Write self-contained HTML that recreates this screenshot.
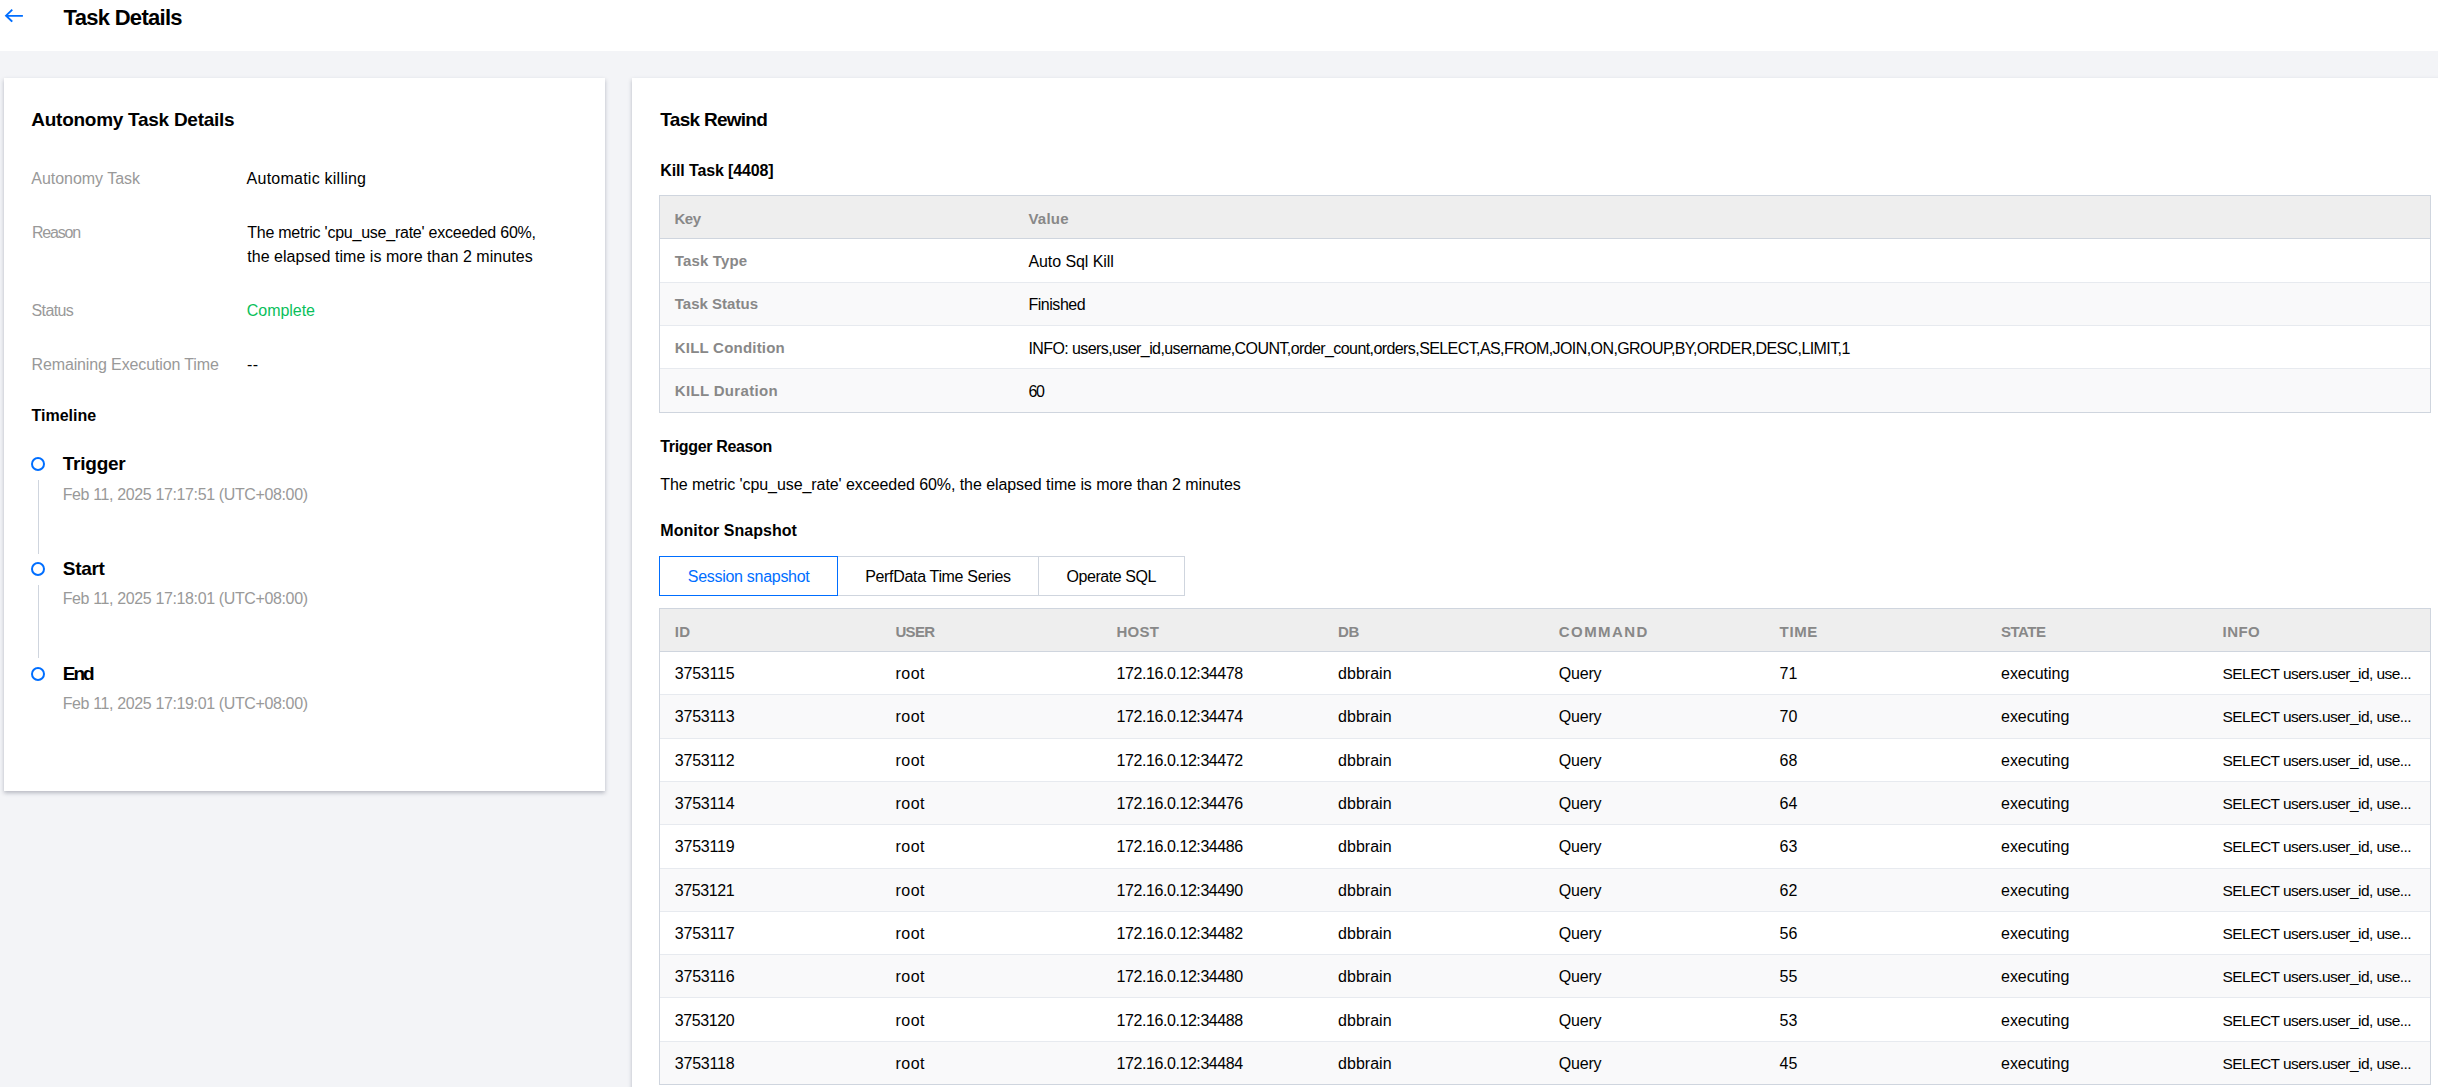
<!DOCTYPE html><html><head><meta charset="utf-8"><style>
html,body{margin:0;padding:0;}
body{width:2438px;height:1087px;overflow:hidden;background:#f3f4f7;position:relative;font-family:"Liberation Sans",sans-serif;}
.t{position:absolute;white-space:nowrap;}
.abs{position:absolute;}
</style></head><body>
<div class="abs" style="left:0;top:0;width:2438px;height:51px;background:#fff"></div>
<svg class="abs" style="left:0;top:0" width="40" height="40" viewBox="0 0 40 40"><path d="M11.6 10.3 L6.0 15.7 L11.6 21.0 M6.4 15.8 H22.0" fill="none" stroke="#006eff" stroke-width="1.8" stroke-linecap="square"/></svg>
<div class="t" style="left:63.60px;top:7.00px;font-size:22px;line-height:22px;font-weight:bold;color:#000;letter-spacing:-0.707px;">Task Details</div>
<div class="abs" style="left:4px;top:78px;width:601px;height:713px;background:#fff;box-shadow:0 2px 4px rgba(54,58,80,.32)"></div>
<div class="t" style="left:31.30px;top:110.00px;font-size:19px;line-height:19px;font-weight:bold;color:#000;letter-spacing:-0.271px;">Autonomy Task Details</div>
<div class="t" style="left:31.30px;top:171.00px;font-size:16px;line-height:16px;color:#999;letter-spacing:-0.035px;">Autonomy Task</div>
<div class="t" style="left:246.60px;top:171.00px;font-size:16px;line-height:16px;color:#000;letter-spacing:0.238px;">Automatic killing</div>
<div class="t" style="left:32.00px;top:225.00px;font-size:16px;line-height:16px;color:#999;letter-spacing:-1.192px;">Reason</div>
<div class="t" style="left:247.20px;top:225.00px;font-size:16px;line-height:16px;color:#000;letter-spacing:-0.238px;">The metric 'cpu_use_rate' exceeded 60%,</div>
<div class="t" style="left:247.20px;top:249.00px;font-size:16px;line-height:16px;color:#000;letter-spacing:0.047px;">the elapsed time is more than 2 minutes</div>
<div class="t" style="left:31.50px;top:303.00px;font-size:16px;line-height:16px;color:#999;letter-spacing:-0.612px;">Status</div>
<div class="t" style="left:246.80px;top:303.00px;font-size:16px;line-height:16px;color:#0abf5b;letter-spacing:-0.040px;">Complete</div>
<div class="t" style="left:31.50px;top:357.00px;font-size:16px;line-height:16px;color:#999;letter-spacing:-0.131px;">Remaining Execution Time</div>
<div class="t" style="left:247.00px;top:357.00px;font-size:16px;line-height:16px;color:#000;letter-spacing:0.360px;">--</div>
<div class="t" style="left:31.50px;top:408.00px;font-size:16px;line-height:16px;font-weight:bold;color:#000;letter-spacing:-0.006px;">Timeline</div>
<div class="abs" style="left:31px;top:457.3px;width:10px;height:10px;border:2px solid #006eff;border-radius:50%"></div>
<div class="t" style="left:62.80px;top:454.00px;font-size:19px;line-height:19px;font-weight:bold;color:#000;letter-spacing:-0.252px;">Trigger</div>
<div class="t" style="left:62.70px;top:487.00px;font-size:16px;line-height:16px;color:#999;letter-spacing:-0.372px;">Feb 11, 2025 17:17:51 (UTC+08:00)</div>
<div class="abs" style="left:38px;top:480.3px;width:1px;height:73.5px;background:#cfd5de"></div>
<div class="abs" style="left:31px;top:561.8px;width:10px;height:10px;border:2px solid #006eff;border-radius:50%"></div>
<div class="t" style="left:62.80px;top:559.00px;font-size:19px;line-height:19px;font-weight:bold;color:#000;letter-spacing:-0.293px;">Start</div>
<div class="t" style="left:62.70px;top:591.00px;font-size:16px;line-height:16px;color:#999;letter-spacing:-0.372px;">Feb 11, 2025 17:18:01 (UTC+08:00)</div>
<div class="abs" style="left:38px;top:584.8px;width:1px;height:73.5px;background:#cfd5de"></div>
<div class="abs" style="left:31px;top:666.6px;width:10px;height:10px;border:2px solid #006eff;border-radius:50%"></div>
<div class="t" style="left:62.80px;top:664.00px;font-size:19px;line-height:19px;font-weight:bold;color:#000;letter-spacing:-2.081px;">End</div>
<div class="t" style="left:62.70px;top:696.00px;font-size:16px;line-height:16px;color:#999;letter-spacing:-0.372px;">Feb 11, 2025 17:19:01 (UTC+08:00)</div>
<div class="abs" style="left:632px;top:78px;width:1900px;height:1100px;background:#fff;box-shadow:0 2px 4px rgba(54,58,80,.32)"></div>
<div class="t" style="left:660.30px;top:110.00px;font-size:19px;line-height:19px;font-weight:bold;color:#000;letter-spacing:-0.716px;">Task Rewind</div>
<div class="t" style="left:660.30px;top:163.00px;font-size:16px;line-height:16px;font-weight:bold;color:#000;letter-spacing:-0.128px;">Kill Task [4408]</div>
<div class="abs" style="left:659px;top:195px;width:1770px;height:216px;border:1px solid #cfd5de"></div>
<div class="abs" style="left:660px;top:196px;width:1770px;height:42px;background:#eeeeee;border-bottom:1px solid #cfd5de"></div>
<div class="abs" style="left:660px;top:239px;width:1770px;height:43px;background:#fff"></div>
<div class="abs" style="left:660px;top:282px;width:1770px;height:1px;background:#e7eaef"></div>
<div class="t" style="left:674.80px;top:253.00px;font-size:15px;line-height:15px;font-weight:bold;color:#888;letter-spacing:0.158px;">Task Type</div>
<div class="t" style="left:1028.40px;top:254.00px;font-size:16px;line-height:16px;color:#000;letter-spacing:-0.073px;">Auto Sql Kill</div>
<div class="abs" style="left:660px;top:283px;width:1770px;height:42px;background:#f9f9fa"></div>
<div class="abs" style="left:660px;top:325px;width:1770px;height:1px;background:#e7eaef"></div>
<div class="t" style="left:674.80px;top:296.00px;font-size:15px;line-height:15px;font-weight:bold;color:#888;letter-spacing:0.010px;">Task Status</div>
<div class="t" style="left:1028.40px;top:297.00px;font-size:16px;line-height:16px;color:#000;letter-spacing:-0.454px;">Finished</div>
<div class="abs" style="left:660px;top:326px;width:1770px;height:42px;background:#fff"></div>
<div class="abs" style="left:660px;top:368px;width:1770px;height:1px;background:#e7eaef"></div>
<div class="t" style="left:674.80px;top:340.00px;font-size:15px;line-height:15px;font-weight:bold;color:#888;letter-spacing:0.214px;">KILL Condition</div>
<div class="t" style="left:1028.40px;top:341.00px;font-size:16px;line-height:16px;color:#000;letter-spacing:-0.586px;">INFO: users,user_id,username,COUNT,order_count,orders,SELECT,AS,FROM,JOIN,ON,GROUP,BY,ORDER,DESC,LIMIT,1</div>
<div class="abs" style="left:660px;top:369px;width:1770px;height:43px;background:#f9f9fa"></div>
<div class="t" style="left:674.80px;top:383.00px;font-size:15px;line-height:15px;font-weight:bold;color:#888;letter-spacing:0.326px;">KILL Duration</div>
<div class="t" style="left:1028.40px;top:384.00px;font-size:16px;line-height:16px;color:#000;letter-spacing:-1.400px;">60</div>
<div class="t" style="left:674.50px;top:211.00px;font-size:15px;line-height:15px;font-weight:bold;color:#888;letter-spacing:-0.512px;">Key</div>
<div class="t" style="left:1028.40px;top:211.00px;font-size:15px;line-height:15px;font-weight:bold;color:#888;letter-spacing:0.253px;">Value</div>
<div class="t" style="left:660.30px;top:439.00px;font-size:16px;line-height:16px;font-weight:bold;color:#000;letter-spacing:-0.345px;">Trigger Reason</div>
<div class="t" style="left:660.30px;top:477.00px;font-size:16px;line-height:16px;color:#000;letter-spacing:-0.071px;">The metric 'cpu_use_rate' exceeded 60%, the elapsed time is more than 2 minutes</div>
<div class="t" style="left:660.30px;top:523.00px;font-size:16px;line-height:16px;font-weight:bold;color:#000;letter-spacing:0.040px;">Monitor Snapshot</div>
<div class="abs" style="left:837px;top:556px;width:347px;height:38px;border:1px solid #cfd5de;border-left:none"></div>
<div class="abs" style="left:1038px;top:556px;width:1px;height:40px;background:#cfd5de"></div>
<div class="abs" style="left:659px;top:556px;width:177px;height:38px;border:1px solid #006eff"></div>
<div class="t" style="left:687.80px;top:569.00px;font-size:16px;line-height:16px;color:#006eff;letter-spacing:-0.288px;">Session snapshot</div>
<div class="t" style="left:865.20px;top:569.00px;font-size:16px;line-height:16px;color:#000;letter-spacing:-0.328px;">PerfData Time Series</div>
<div class="t" style="left:1066.50px;top:569.00px;font-size:16px;line-height:16px;color:#000;letter-spacing:-0.448px;">Operate SQL</div>
<div class="abs" style="left:659px;top:608px;width:1770px;height:475px;border:1px solid #cfd5de"></div>
<div class="abs" style="left:660px;top:609px;width:1770px;height:42px;background:#eeeeee;border-bottom:1px solid #cfd5de"></div>
<div class="t" style="left:674.80px;top:624.00px;font-size:15px;line-height:15px;font-weight:bold;color:#888;letter-spacing:0.300px;">ID</div>
<div class="t" style="left:895.50px;top:624.00px;font-size:15px;line-height:15px;font-weight:bold;color:#888;letter-spacing:-0.721px;">USER</div>
<div class="t" style="left:1116.50px;top:624.00px;font-size:15px;line-height:15px;font-weight:bold;color:#888;letter-spacing:0.279px;">HOST</div>
<div class="t" style="left:1338.00px;top:624.00px;font-size:15px;line-height:15px;font-weight:bold;color:#888;letter-spacing:-0.275px;">DB</div>
<div class="t" style="left:1558.80px;top:624.00px;font-size:15px;line-height:15px;font-weight:bold;color:#888;letter-spacing:1.435px;">COMMAND</div>
<div class="t" style="left:1779.60px;top:624.00px;font-size:15px;line-height:15px;font-weight:bold;color:#888;letter-spacing:0.629px;">TIME</div>
<div class="t" style="left:2001.00px;top:624.00px;font-size:15px;line-height:15px;font-weight:bold;color:#888;letter-spacing:-0.488px;">STATE</div>
<div class="t" style="left:2222.50px;top:624.00px;font-size:15px;line-height:15px;font-weight:bold;color:#888;letter-spacing:0.483px;">INFO</div>
<div class="abs" style="left:660px;top:652px;width:1770px;height:42px;background:#fff"></div>
<div class="abs" style="left:660px;top:694px;width:1770px;height:1px;background:#e7eaef"></div>
<div class="t" style="left:674.80px;top:666.00px;font-size:16px;line-height:16px;color:#000;letter-spacing:-0.220px;">3753115</div>
<div class="t" style="left:895.50px;top:666.00px;font-size:16px;line-height:16px;color:#000;letter-spacing:0.480px;">root</div>
<div class="t" style="left:1116.50px;top:666.00px;font-size:16px;line-height:16px;color:#000;letter-spacing:-0.424px;">172.16.0.12:34478</div>
<div class="t" style="left:1338.00px;top:666.00px;font-size:16px;line-height:16px;color:#000;letter-spacing:0.040px;">dbbrain</div>
<div class="t" style="left:1558.80px;top:666.00px;font-size:16px;line-height:16px;color:#000;letter-spacing:-0.190px;">Query</div>
<div class="t" style="left:1779.60px;top:666.00px;font-size:16px;line-height:16px;color:#000;">71</div>
<div class="t" style="left:2001.00px;top:666.00px;font-size:16px;line-height:16px;color:#000;letter-spacing:-0.023px;">executing</div>
<div class="t" style="left:2222.50px;top:666.00px;font-size:15.5px;line-height:15.5px;color:#000;letter-spacing:-0.545px;">SELECT users.user_id, use...</div>
<div class="abs" style="left:660px;top:695px;width:1770px;height:43px;background:#f9f9fa"></div>
<div class="abs" style="left:660px;top:738px;width:1770px;height:1px;background:#e7eaef"></div>
<div class="t" style="left:674.80px;top:709.00px;font-size:16px;line-height:16px;color:#000;letter-spacing:-0.220px;">3753113</div>
<div class="t" style="left:895.50px;top:709.00px;font-size:16px;line-height:16px;color:#000;letter-spacing:0.480px;">root</div>
<div class="t" style="left:1116.50px;top:709.00px;font-size:16px;line-height:16px;color:#000;letter-spacing:-0.424px;">172.16.0.12:34474</div>
<div class="t" style="left:1338.00px;top:709.00px;font-size:16px;line-height:16px;color:#000;letter-spacing:0.040px;">dbbrain</div>
<div class="t" style="left:1558.80px;top:709.00px;font-size:16px;line-height:16px;color:#000;letter-spacing:-0.190px;">Query</div>
<div class="t" style="left:1779.60px;top:709.00px;font-size:16px;line-height:16px;color:#000;">70</div>
<div class="t" style="left:2001.00px;top:709.00px;font-size:16px;line-height:16px;color:#000;letter-spacing:-0.023px;">executing</div>
<div class="t" style="left:2222.50px;top:709.00px;font-size:15.5px;line-height:15.5px;color:#000;letter-spacing:-0.545px;">SELECT users.user_id, use...</div>
<div class="abs" style="left:660px;top:739px;width:1770px;height:42px;background:#fff"></div>
<div class="abs" style="left:660px;top:781px;width:1770px;height:1px;background:#e7eaef"></div>
<div class="t" style="left:674.80px;top:753.00px;font-size:16px;line-height:16px;color:#000;letter-spacing:-0.220px;">3753112</div>
<div class="t" style="left:895.50px;top:753.00px;font-size:16px;line-height:16px;color:#000;letter-spacing:0.480px;">root</div>
<div class="t" style="left:1116.50px;top:753.00px;font-size:16px;line-height:16px;color:#000;letter-spacing:-0.424px;">172.16.0.12:34472</div>
<div class="t" style="left:1338.00px;top:753.00px;font-size:16px;line-height:16px;color:#000;letter-spacing:0.040px;">dbbrain</div>
<div class="t" style="left:1558.80px;top:753.00px;font-size:16px;line-height:16px;color:#000;letter-spacing:-0.190px;">Query</div>
<div class="t" style="left:1779.60px;top:753.00px;font-size:16px;line-height:16px;color:#000;">68</div>
<div class="t" style="left:2001.00px;top:753.00px;font-size:16px;line-height:16px;color:#000;letter-spacing:-0.023px;">executing</div>
<div class="t" style="left:2222.50px;top:753.00px;font-size:15.5px;line-height:15.5px;color:#000;letter-spacing:-0.545px;">SELECT users.user_id, use...</div>
<div class="abs" style="left:660px;top:782px;width:1770px;height:42px;background:#f9f9fa"></div>
<div class="abs" style="left:660px;top:824px;width:1770px;height:1px;background:#e7eaef"></div>
<div class="t" style="left:674.80px;top:796.00px;font-size:16px;line-height:16px;color:#000;letter-spacing:-0.220px;">3753114</div>
<div class="t" style="left:895.50px;top:796.00px;font-size:16px;line-height:16px;color:#000;letter-spacing:0.480px;">root</div>
<div class="t" style="left:1116.50px;top:796.00px;font-size:16px;line-height:16px;color:#000;letter-spacing:-0.424px;">172.16.0.12:34476</div>
<div class="t" style="left:1338.00px;top:796.00px;font-size:16px;line-height:16px;color:#000;letter-spacing:0.040px;">dbbrain</div>
<div class="t" style="left:1558.80px;top:796.00px;font-size:16px;line-height:16px;color:#000;letter-spacing:-0.190px;">Query</div>
<div class="t" style="left:1779.60px;top:796.00px;font-size:16px;line-height:16px;color:#000;">64</div>
<div class="t" style="left:2001.00px;top:796.00px;font-size:16px;line-height:16px;color:#000;letter-spacing:-0.023px;">executing</div>
<div class="t" style="left:2222.50px;top:796.00px;font-size:15.5px;line-height:15.5px;color:#000;letter-spacing:-0.545px;">SELECT users.user_id, use...</div>
<div class="abs" style="left:660px;top:825px;width:1770px;height:43px;background:#fff"></div>
<div class="abs" style="left:660px;top:868px;width:1770px;height:1px;background:#e7eaef"></div>
<div class="t" style="left:674.80px;top:839.00px;font-size:16px;line-height:16px;color:#000;letter-spacing:-0.220px;">3753119</div>
<div class="t" style="left:895.50px;top:839.00px;font-size:16px;line-height:16px;color:#000;letter-spacing:0.480px;">root</div>
<div class="t" style="left:1116.50px;top:839.00px;font-size:16px;line-height:16px;color:#000;letter-spacing:-0.424px;">172.16.0.12:34486</div>
<div class="t" style="left:1338.00px;top:839.00px;font-size:16px;line-height:16px;color:#000;letter-spacing:0.040px;">dbbrain</div>
<div class="t" style="left:1558.80px;top:839.00px;font-size:16px;line-height:16px;color:#000;letter-spacing:-0.190px;">Query</div>
<div class="t" style="left:1779.60px;top:839.00px;font-size:16px;line-height:16px;color:#000;">63</div>
<div class="t" style="left:2001.00px;top:839.00px;font-size:16px;line-height:16px;color:#000;letter-spacing:-0.023px;">executing</div>
<div class="t" style="left:2222.50px;top:839.00px;font-size:15.5px;line-height:15.5px;color:#000;letter-spacing:-0.545px;">SELECT users.user_id, use...</div>
<div class="abs" style="left:660px;top:869px;width:1770px;height:42px;background:#f9f9fa"></div>
<div class="abs" style="left:660px;top:911px;width:1770px;height:1px;background:#e7eaef"></div>
<div class="t" style="left:674.80px;top:883.00px;font-size:16px;line-height:16px;color:#000;letter-spacing:-0.413px;">3753121</div>
<div class="t" style="left:895.50px;top:883.00px;font-size:16px;line-height:16px;color:#000;letter-spacing:0.480px;">root</div>
<div class="t" style="left:1116.50px;top:883.00px;font-size:16px;line-height:16px;color:#000;letter-spacing:-0.424px;">172.16.0.12:34490</div>
<div class="t" style="left:1338.00px;top:883.00px;font-size:16px;line-height:16px;color:#000;letter-spacing:0.040px;">dbbrain</div>
<div class="t" style="left:1558.80px;top:883.00px;font-size:16px;line-height:16px;color:#000;letter-spacing:-0.190px;">Query</div>
<div class="t" style="left:1779.60px;top:883.00px;font-size:16px;line-height:16px;color:#000;">62</div>
<div class="t" style="left:2001.00px;top:883.00px;font-size:16px;line-height:16px;color:#000;letter-spacing:-0.023px;">executing</div>
<div class="t" style="left:2222.50px;top:883.00px;font-size:15.5px;line-height:15.5px;color:#000;letter-spacing:-0.545px;">SELECT users.user_id, use...</div>
<div class="abs" style="left:660px;top:912px;width:1770px;height:42px;background:#fff"></div>
<div class="abs" style="left:660px;top:954px;width:1770px;height:1px;background:#e7eaef"></div>
<div class="t" style="left:674.80px;top:926.00px;font-size:16px;line-height:16px;color:#000;letter-spacing:-0.220px;">3753117</div>
<div class="t" style="left:895.50px;top:926.00px;font-size:16px;line-height:16px;color:#000;letter-spacing:0.480px;">root</div>
<div class="t" style="left:1116.50px;top:926.00px;font-size:16px;line-height:16px;color:#000;letter-spacing:-0.424px;">172.16.0.12:34482</div>
<div class="t" style="left:1338.00px;top:926.00px;font-size:16px;line-height:16px;color:#000;letter-spacing:0.040px;">dbbrain</div>
<div class="t" style="left:1558.80px;top:926.00px;font-size:16px;line-height:16px;color:#000;letter-spacing:-0.190px;">Query</div>
<div class="t" style="left:1779.60px;top:926.00px;font-size:16px;line-height:16px;color:#000;">56</div>
<div class="t" style="left:2001.00px;top:926.00px;font-size:16px;line-height:16px;color:#000;letter-spacing:-0.023px;">executing</div>
<div class="t" style="left:2222.50px;top:926.00px;font-size:15.5px;line-height:15.5px;color:#000;letter-spacing:-0.545px;">SELECT users.user_id, use...</div>
<div class="abs" style="left:660px;top:955px;width:1770px;height:42px;background:#f9f9fa"></div>
<div class="abs" style="left:660px;top:997px;width:1770px;height:1px;background:#e7eaef"></div>
<div class="t" style="left:674.80px;top:969.00px;font-size:16px;line-height:16px;color:#000;letter-spacing:-0.220px;">3753116</div>
<div class="t" style="left:895.50px;top:969.00px;font-size:16px;line-height:16px;color:#000;letter-spacing:0.480px;">root</div>
<div class="t" style="left:1116.50px;top:969.00px;font-size:16px;line-height:16px;color:#000;letter-spacing:-0.424px;">172.16.0.12:34480</div>
<div class="t" style="left:1338.00px;top:969.00px;font-size:16px;line-height:16px;color:#000;letter-spacing:0.040px;">dbbrain</div>
<div class="t" style="left:1558.80px;top:969.00px;font-size:16px;line-height:16px;color:#000;letter-spacing:-0.190px;">Query</div>
<div class="t" style="left:1779.60px;top:969.00px;font-size:16px;line-height:16px;color:#000;">55</div>
<div class="t" style="left:2001.00px;top:969.00px;font-size:16px;line-height:16px;color:#000;letter-spacing:-0.023px;">executing</div>
<div class="t" style="left:2222.50px;top:969.00px;font-size:15.5px;line-height:15.5px;color:#000;letter-spacing:-0.545px;">SELECT users.user_id, use...</div>
<div class="abs" style="left:660px;top:998px;width:1770px;height:43px;background:#fff"></div>
<div class="abs" style="left:660px;top:1041px;width:1770px;height:1px;background:#e7eaef"></div>
<div class="t" style="left:674.80px;top:1013.00px;font-size:16px;line-height:16px;color:#000;letter-spacing:-0.413px;">3753120</div>
<div class="t" style="left:895.50px;top:1013.00px;font-size:16px;line-height:16px;color:#000;letter-spacing:0.480px;">root</div>
<div class="t" style="left:1116.50px;top:1013.00px;font-size:16px;line-height:16px;color:#000;letter-spacing:-0.424px;">172.16.0.12:34488</div>
<div class="t" style="left:1338.00px;top:1013.00px;font-size:16px;line-height:16px;color:#000;letter-spacing:0.040px;">dbbrain</div>
<div class="t" style="left:1558.80px;top:1013.00px;font-size:16px;line-height:16px;color:#000;letter-spacing:-0.190px;">Query</div>
<div class="t" style="left:1779.60px;top:1013.00px;font-size:16px;line-height:16px;color:#000;">53</div>
<div class="t" style="left:2001.00px;top:1013.00px;font-size:16px;line-height:16px;color:#000;letter-spacing:-0.023px;">executing</div>
<div class="t" style="left:2222.50px;top:1013.00px;font-size:15.5px;line-height:15.5px;color:#000;letter-spacing:-0.545px;">SELECT users.user_id, use...</div>
<div class="abs" style="left:660px;top:1042px;width:1770px;height:42px;background:#f9f9fa"></div>
<div class="t" style="left:674.80px;top:1056.00px;font-size:16px;line-height:16px;color:#000;letter-spacing:-0.220px;">3753118</div>
<div class="t" style="left:895.50px;top:1056.00px;font-size:16px;line-height:16px;color:#000;letter-spacing:0.480px;">root</div>
<div class="t" style="left:1116.50px;top:1056.00px;font-size:16px;line-height:16px;color:#000;letter-spacing:-0.424px;">172.16.0.12:34484</div>
<div class="t" style="left:1338.00px;top:1056.00px;font-size:16px;line-height:16px;color:#000;letter-spacing:0.040px;">dbbrain</div>
<div class="t" style="left:1558.80px;top:1056.00px;font-size:16px;line-height:16px;color:#000;letter-spacing:-0.190px;">Query</div>
<div class="t" style="left:1779.60px;top:1056.00px;font-size:16px;line-height:16px;color:#000;">45</div>
<div class="t" style="left:2001.00px;top:1056.00px;font-size:16px;line-height:16px;color:#000;letter-spacing:-0.023px;">executing</div>
<div class="t" style="left:2222.50px;top:1056.00px;font-size:15.5px;line-height:15.5px;color:#000;letter-spacing:-0.545px;">SELECT users.user_id, use...</div>
</body></html>
